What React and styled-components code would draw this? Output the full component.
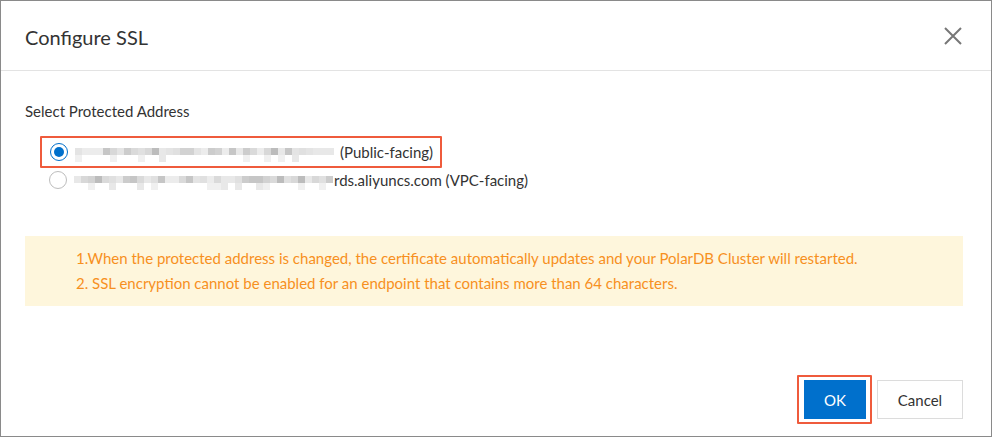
import styled, { createGlobalStyle } from 'styled-components';
import { useState } from 'react';

const Global = createGlobalStyle`
  html, body { margin: 0; padding: 0; background: #fff; }
  body { font-family: Lato, "Open Sans", Arial, sans-serif; }
`;

const Frame = styled.div`
  box-sizing: border-box;
  width: 992px;
  height: 437px;
  border: 1px solid #8a8a8a;
  display: flex;
  flex-direction: column;
  background: #fff;
  color: #333;
`;

const Header = styled.div`
  height: 69px;
  border-bottom: 1px solid #e3e3e3;
  display: flex;
  align-items: center;
  justify-content: space-between;
  padding: 0 27px 0 24px;
  flex-shrink: 0;
`;

const Title = styled.h2`
  margin: 0;
  font-size: 20px;
  font-weight: 400;
  color: #333;
  padding-top: 2px;
`;

const CloseBtn = styled.button`
  border: none;
  background: none;
  padding: 0;
  width: 22px;
  height: 22px;
  cursor: pointer;
  display: flex;
  align-items: center;
  justify-content: center;
`;

const Body = styled.div`
  flex: 1;
  padding: 30px 28px 0 24px;
`;

const Label = styled.div`
  font-size: 15px;
  line-height: 20px;
  color: #333;
  margin-bottom: 15px;
`;

const Highlight = styled.div`
  display: ${(p) => (p.$inline ? 'inline-flex' : 'flex')};
  border: 2px solid #ef5b3c;
  border-radius: 1px;
  padding: ${(p) => p.$pad || '0'};
  width: ${(p) => p.$w || 'auto'};
  box-sizing: border-box;
`;

const RadioRow = styled.label`
  display: flex;
  align-items: center;
  height: ${(p) => p.$h || '24px'};
  padding-left: ${(p) => p.$pl || '24px'};
  font-size: 15px;
  color: #333;
  cursor: pointer;
`;

const Radio = styled.span`
  box-sizing: border-box;
  width: 18px;
  height: 18px;
  border-radius: 50%;
  border: 1px solid ${(p) => (p.$on ? '#0070cc' : '#bdbdbd')};
  margin-right: 7px;
  display: flex;
  align-items: center;
  justify-content: center;
  flex-shrink: 0;
  &::after {
    content: '';
    width: 10px;
    height: 10px;
    border-radius: 50%;
    background: ${(p) => (p.$on ? '#0070cc' : 'transparent')};
  }
`;

const Mosaic = styled.span`
  display: inline-flex;
  flex-wrap: wrap;
  width: ${(p) => p.$w}px;
  height: 14px;
  margin-right: ${(p) => p.$gap}px;
  align-content: flex-start;
  transform: translateY(3px);
`;

const Pixel = styled.span`
  display: block;
  width: 7px;
  height: 7px;
  background: ${(p) => p.$c};
`;

const Notice = styled.div`
  margin-top: 44px;
  background: #fef6dc;
  height: 70px;
  box-sizing: border-box;
  padding: 10px 0 0 51px;
  color: #f7901e;
  font-size: 15px;
  line-height: 25px;
`;

const Footer = styled.div`
  display: flex;
  justify-content: flex-end;
  align-items: center;
  gap: 5px;
  padding: 0 28px 12px 0;
`;

const Button = styled.button`
  box-sizing: border-box;
  height: 39px;
  min-width: ${(p) => p.$w || '62px'};
  padding: 0 16px;
  font-family: inherit;
  font-size: 15px;
  border-radius: 0;
  cursor: pointer;
  border: 1px solid ${(p) => (p.$primary ? '#0070cc' : '#dcdcdc')};
  background: ${(p) => (p.$primary ? '#0070cc' : '#fff')};
  color: ${(p) => (p.$primary ? '#fff' : '#333')};
`;

const top = ['#e0e0e0', '#d2d2d2', '#c6c6c6', '#e8e8e8', '#d8d8d8', '#bcbcbc', '#ececec', '#cccccc', '#e4e4e4', '#dadada'];
const low = ['transparent', 'transparent', 'transparent', '#f0f0f0', '#e8e8e8', 'transparent'];

const hash = (n) => {
  let h = Math.imul(n ^ 0x5bd1e995, 2654435761);
  h ^= h >>> 13;
  h = Math.imul(h, 1274126177);
  return (h ^ (h >>> 16)) >>> 0;
};

const Blur = ({ width, seed, gap }) => {
  const cols = Math.floor(width / 7);
  const cells = [];
  for (let i = 0; i < cols * 2; i++) {
    const row = i >= cols ? 1 : 0;
    const h = hash(i + seed * 1000);
    const c = row === 0 ? top[h % top.length] : low[h % low.length];
    cells.push(<Pixel key={i} $c={c} />);
  }
  return <Mosaic $w={cols * 7} $gap={gap}>{cells}</Mosaic>;
};

const App = () => {
  const [picked, setPicked] = useState(0);

  return (
    <>
      <Global />
      <Frame>
        <Header>
          <Title>Configure SSL</Title>
          <CloseBtn aria-label="close">
            <svg width="18" height="18" viewBox="0 0 18 18">
              <path d="M1 1 L17 17 M17 1 L1 17" stroke="#777" strokeWidth="2" />
            </svg>
          </CloseBtn>
        </Header>
        <Body>
          <Label>Select Protected Address</Label>
          <Highlight $inline $w="402px" style={{ marginLeft: '15px' }}>
            <RadioRow $h="28px" $pl="8px" onClick={() => setPicked(0)}>
              <Radio $on={picked === 0} />
              <Blur width={259} seed={1} gap={6} />
              (Public-facing)
            </RadioRow>
          </Highlight>
          <RadioRow onClick={() => setPicked(1)}>
            <Radio $on={picked === 1} />
            <Blur width={259} seed={4} gap={1} />
            rds.aliyuncs.com (VPC-facing)
          </RadioRow>
          <Notice>
            <div>1.When the protected address is changed, the certificate automatically updates and your PolarDB Cluster will restarted.</div>
            <div>2. SSL encryption cannot be enabled for an endpoint that contains more than 64 characters.</div>
          </Notice>
        </Body>
        <Footer>
          <Highlight $pad="3px 4px 3px 5px">
            <Button $primary>OK</Button>
          </Highlight>
          <Button $w="86px">Cancel</Button>
        </Footer>
      </Frame>
    </>
  );
};

export default App;
